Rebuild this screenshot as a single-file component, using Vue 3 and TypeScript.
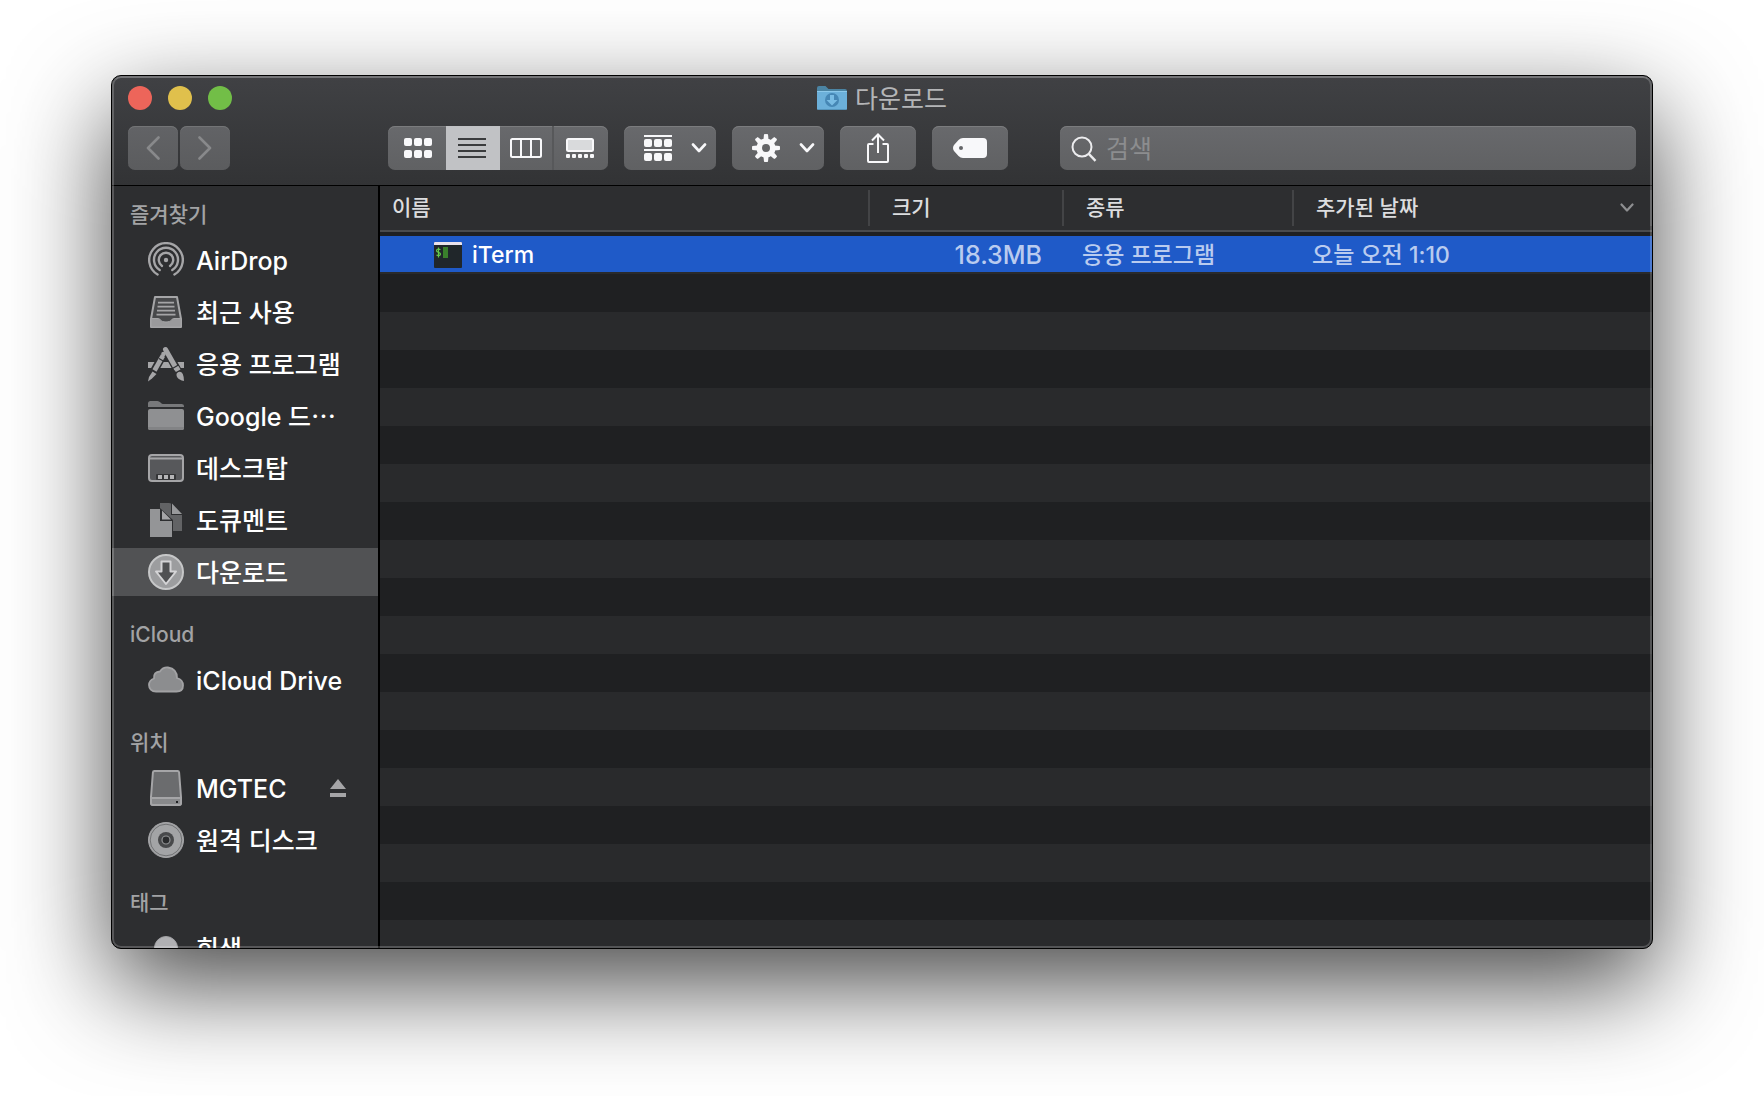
<script setup lang="ts">
import { ref } from 'vue'

interface Place {
  icon: string
  label: string
  ejectable?: boolean
}

interface PlaceGroup {
  title: string
  places: Place[]
}

interface FileEntry {
  name: string
  size: string
  kind: string
  added: string
}

const groups: PlaceGroup[] = [
  {
    title: '즐겨찾기',
    places: [
      { icon: 'airdrop', label: 'AirDrop' },
      { icon: 'recents', label: '최근 사용' },
      { icon: 'apps', label: '응용 프로그램' },
      { icon: 'folder', label: 'Google 드⋯' },
      { icon: 'desktop', label: '데스크탑' },
      { icon: 'documents', label: '도큐멘트' },
      { icon: 'downloads', label: '다운로드' },
    ],
  },
  { title: 'iCloud', places: [{ icon: 'cloud', label: 'iCloud Drive' }] },
  {
    title: '위치',
    places: [
      { icon: 'drive', label: 'MGTEC', ejectable: true },
      { icon: 'disc', label: '원격 디스크' },
    ],
  },
  { title: '태그', places: [{ icon: 'tag', label: '회색' }] },
]

const files: FileEntry[] = [
  { name: 'iTerm', size: '18.3MB', kind: '응용 프로그램', added: '오늘 오전 1:10' },
]

const gearAngles = [0, 45, 90, 135, 180, 225, 270, 315]
const current = ref('다운로드')
const selected = ref('iTerm')
const query = ref('')
</script>

<template>
  <div class="desktop">
    <main class="window">
      <header class="header">
        <div class="titlebar">
          <div class="lights">
            <button class="light close" aria-label="닫기"></button>
            <button class="light minimize" aria-label="최소화"></button>
            <button class="light zoom" aria-label="확대"></button>
          </div>
          <h1 class="title">
            <svg width="30" height="24" viewBox="0 0 30 24" aria-hidden="true">
              <path d="M0 2a2 2 0 0 1 2-2h6.500l3 3H28a2 2 0 0 1 2 2v4H0z" fill="#4b84a3" />
              <rect y="5" width="30" height="19" rx="1.500" fill="#6cb0da" />
              <path d="M0 5.500h30" stroke="#8cc8ea" />
              <path d="M1 23.500h28" stroke="#5594bb" />
              <circle cx="15" cy="14" r="7" fill="#4687b5" />
              <path d="M13 9h4v5h3.500L15 19.500 9.500 14H13z" fill="#79bce4" />
            </svg>
            <span>다운로드</span>
          </h1>
        </div>

        <div class="toolbar">
          <div class="history">
            <button class="control nav" aria-label="뒤로">
              <svg width="14" height="24" viewBox="0 0 14 24"><path d="M12.500 1.500 2 12l10.500 10.500" fill="none" stroke="#88898b" stroke-width="2.600" stroke-linecap="round" stroke-linejoin="round" /></svg>
            </button>
            <button class="control nav" aria-label="앞으로">
              <svg width="14" height="24" viewBox="0 0 14 24"><path d="M1.500 1.500 12 12 1.500 22.500" fill="none" stroke="#88898b" stroke-width="2.600" stroke-linecap="round" stroke-linejoin="round" /></svg>
            </button>
          </div>

          <div class="actions">
            <div class="control views">
              <button class="view first" aria-label="아이콘">
                <svg width="28" height="20" viewBox="0 0 28 20" fill="#f8f8fa">
                  <rect v-for="n in 6" :key="n" :x="((n - 1) % 3) * 10" :y="n > 3 ? 12 : 0" width="8" height="8" rx="2" />
                </svg>
              </button>
              <button class="view active" aria-label="목록" aria-pressed="true">
                <svg width="28" height="20" viewBox="0 0 28 20" fill="#3a3b3d">
                  <rect v-for="n in 4" :key="n" :y="(n - 1) * 6" width="28" height="2" />
                </svg>
              </button>
              <button class="view columns" aria-label="계층">
                <svg width="32" height="20" viewBox="0 0 32 20" fill="none" stroke="#f8f8fa" stroke-width="2">
                  <rect x="1" y="1" width="30" height="18" rx="1.500" />
                  <path d="M11 1v18M21 1v18" />
                </svg>
              </button>
              <button class="view last" aria-label="갤러리">
                <svg width="28" height="20" viewBox="0 0 28 20">
                  <rect x="1" y="1" width="26" height="12" rx="1.500" fill="#d9dadc" stroke="#f8f8fa" stroke-width="2" />
                  <rect v-for="n in 5" :key="n" :x="(n - 1) * 6" y="16" width="4" height="4" rx="1" fill="#f8f8fa" />
                </svg>
              </button>
            </div>

            <button class="control menu" aria-label="정렬">
              <svg width="28" height="26" viewBox="0 0 28 26" fill="#f8f8fa">
                <rect width="28" height="2" />
                <rect v-for="n in 3" :key="n" :x="(n - 1) * 10" y="4" width="8" height="8" rx="2" />
                <rect y="14" width="28" height="2" />
                <rect v-for="n in 3" :key="n + 3" :x="(n - 1) * 10" y="18" width="8" height="8" rx="2" />
              </svg>
              <svg width="16" height="10" viewBox="0 0 16 10"><path d="M2 1.500 8 8l6-6.500" fill="none" stroke="#f8f8fa" stroke-width="2.600" stroke-linecap="round" stroke-linejoin="round" /></svg>
            </button>

            <button class="control menu" aria-label="동작">
              <svg width="28" height="28" viewBox="0 0 28 28">
                <g fill="#f8f8fa">
                  <path v-for="a in gearAngles" :key="a" d="M11.500 5.500 12 .3q2-.6 4 0l.5 5.200z" :transform="`rotate(${a} 14 14)`" />
                </g>
                <circle cx="14" cy="14" r="6.800" fill="none" stroke="#f8f8fa" stroke-width="5.600" />
              </svg>
              <svg width="16" height="10" viewBox="0 0 16 10"><path d="M2 1.500 8 8l6-6.500" fill="none" stroke="#f8f8fa" stroke-width="2.600" stroke-linecap="round" stroke-linejoin="round" /></svg>
            </button>

            <button class="control single" aria-label="공유">
              <svg width="22" height="30" viewBox="0 0 22 30" fill="none" stroke="#f8f8fa" stroke-width="2">
                <path d="M6.500 11H2a1 1 0 0 0-1 1v16a1 1 0 0 0 1 1h18a1 1 0 0 0 1-1V12a1 1 0 0 0-1-1h-4.500M11 20V1.500M5 7.500l6-6 6 6" />
              </svg>
            </button>

            <button class="control single" aria-label="태그 편집">
              <svg width="34" height="20" viewBox="0 0 34 20">
                <path fill-rule="evenodd" fill="#f8f8fa" d="M10 0h20a4 4 0 0 1 4 4v12a4 4 0 0 1-4 4H10Q7.500 20 5.500 18L1 13Q-1 10 1 7L5.500 2Q7.500 0 10 0zM8 8a2 2 0 1 0 0 4 2 2 0 0 0 0-4z" />
              </svg>
            </button>
          </div>

          <label class="control search">
            <svg width="26" height="26" viewBox="0 0 26 26" fill="none" stroke="#ececee" stroke-width="2">
              <circle cx="11" cy="11" r="9.500" />
              <path d="m17.800 17.800 6.700 7" stroke-width="2.400" />
            </svg>
            <input v-model="query" type="search" placeholder="검색" aria-label="검색" />
          </label>
        </div>
      </header>

      <div class="body">
        <nav class="sidebar">
          <section v-for="group in groups" :key="group.title" class="group">
            <h2>{{ group.title }}</h2>
            <ul>
              <li v-for="place in group.places" :key="place.label">
                <a href="#" class="place" :class="{ current: current === place.label }" @click.prevent="current = place.label">
                  <svg class="place-icon" width="36" height="36" viewBox="0 0 36 36" aria-hidden="true">
                    <g v-if="place.icon === 'airdrop'" fill="none" stroke="#a5a5a7" stroke-width="2.400" stroke-linecap="round">
                      <path d="M9.600 32.500a16.800 16.800 0 1 1 16.800 0" />
                      <path d="M11.700 28a12 12 0 1 1 12.600 0" />
                      <path d="M14 23.900a7.200 7.200 0 1 1 8 0" />
                      <circle cx="18" cy="18" r="2.200" fill="#a5a5a7" stroke="none" />
                    </g>
                    <g v-else-if="place.icon === 'recents'">
                      <path d="M7 3h22l4 22v8H3v-8z" fill="#48494b" stroke="#a5a5a7" stroke-width="2" stroke-linejoin="round" />
                      <path d="M10 8.700h16M9.500 12.700h17M9 16.700h18M8.500 20.700h19" stroke="#a5a5a7" stroke-width="1.800" />
                      <path d="M3 24.500h7.500c2 0 1.500 3.500 7.500 3.500s5.500-3.500 7.500-3.500H33V33H3z" fill="#9a9a9c" stroke="#a5a5a7" />
                    </g>
                    <g v-else-if="place.icon === 'apps'" fill="#a5a5a7">
                      <path d="M0 16h36v6H0z" />
                      <path d="M15.500 8 5 27M17 2l14 25" stroke="#2d2e30" stroke-width="8" />
                      <path d="M15 9.500 6.500 24.500" stroke="#a5a5a7" stroke-width="4.600" />
                      <path d="M4.500 25.500 8.500 28 4 32.500 0 35.500 1 31z" />
                      <circle cx="15.500" cy="8" r="2.300" />
                      <path d="M17.500 3.500 28 22" stroke="#a5a5a7" stroke-width="5" stroke-linecap="round" />
                      <path d="m25.500 22.500 5-2.500 2 3.500-4.600 2.500z" />
                      <path d="M28.800 27.200q3.700-3.200 6 .8 1.200 3 1.200 7-5-1-7-4-1-2-.2-3.800z" />
                      <path d="m24 22.700 6-3.500M11 12.500l5 3" stroke="#2d2e30" stroke-width="1.200" />
                    </g>
                    <g v-else-if="place.icon === 'folder'">
                      <path d="M0 9V5.500Q0 3 2.500 3h7q1.500 0 3 1.500T15 6h18.500Q36 6 36 8v1z" fill="#78797b" />
                      <rect y="11" width="36" height="21" rx="2" fill="#8f9092" />
                      <path d="M0 29h36v1q0 2-2 2H2q-2 0-2-2z" fill="#828385" />
                    </g>
                    <g v-else-if="place.icon === 'desktop'">
                      <rect x="1" y="5" width="34" height="26" rx="3" fill="#57585b" stroke="#a5a5a7" stroke-width="2" />
                      <path d="M1 8.500h34" stroke="#a5a5a7" stroke-width="2" />
                      <rect x="8" y="24" width="20" height="6" rx="1" fill="#343537" />
                      <path d="M10 27h4m2 0h4m2 0h4" stroke="#b5b5b7" stroke-width="4" />
                    </g>
                    <g v-else-if="place.icon === 'documents'">
                      <path d="M12 1h9l2 .5V13h11v16h-9L12 18z" fill="#626365" />
                      <path d="M24 1.500 34 12H24z" fill="#98999b" />
                      <path d="M1 6h11l13 12v18H1z" fill="#2d2e30" />
                      <path d="M2 7h10v12h12v16H2z" fill="#949597" />
                      <path d="M14 8.500 23 17.500H14z" fill="#a5a5a7" />
                    </g>
                    <g v-else-if="place.icon === 'downloads'">
                      <circle cx="18" cy="18" r="17" fill="#9c9d9f" stroke="#c6c7c8" stroke-width="2" />
                      <path d="M13.500 7.500h9v10H28L18 30 8 17.500h5.500z" fill="#505153" stroke="#d4d4d6" stroke-width="2" stroke-linejoin="round" />
                    </g>
                    <path v-else-if="place.icon === 'cloud'" d="M8 29.500C3.500 29.500 1 26.500 1 23q0-4.500 5-6.500-.5-6.500 6-7Q15 5 20 5.500q9 1.500 9 10.500 6 1.500 6 7.500 0 6-6.500 6z" fill="#8c8d8f" stroke="#a2a2a4" stroke-width="1.800" />
                    <g v-else-if="place.icon === 'drive'">
                      <path d="M6.500 1h23q1.500 0 1.600 1.500L33 27v5.500q0 2.500-2.500 2.500h-25Q3 35 3 32.500V27L4.900 2.500Q5 1 6.500 1z" fill="#6b6c6e" stroke="#a5a5a7" stroke-width="2" />
                      <path d="M3 28h30v5q0 2-2 2H5q-2 0-2-2z" fill="#88898b" stroke="#a5a5a7" stroke-width="2" />
                      <rect x="28" y="31" width="2" height="2" fill="#1f2022" />
                    </g>
                    <g v-else-if="place.icon === 'disc'" fill="none">
                      <circle cx="18" cy="18" r="17.500" fill="#a3a4a6" stroke="#a5a5a7" />
                      <circle cx="18" cy="18" r="15.800" stroke="#707173" />
                      <circle cx="18" cy="18" r="8" fill="#48494b" />
                      <circle cx="18" cy="18" r="4" fill="#2a2b2d" stroke="#929395" stroke-width="1.200" />
                    </g>
                    <circle v-else cx="18" cy="18" r="11.500" fill="#b0b0b3" stroke="#a0a0a3" />
                  </svg>
                  <span class="place-label">{{ place.label }}</span>
                  <svg v-if="place.ejectable" class="eject" width="16" height="18" viewBox="0 0 16 18" fill="#a5a5a7" aria-hidden="true">
                    <path d="m8 0 8 10H0zM0 14h16v4H0z" />
                  </svg>
                </a>
              </li>
            </ul>
          </section>
        </nav>

        <section class="listing">
          <table>
            <colgroup>
              <col />
              <col class="col-size" />
              <col class="col-kind" />
              <col class="col-added" />
            </colgroup>
            <thead>
              <tr>
                <th scope="col"><span class="heading lead">이름</span></th>
                <th scope="col"><span class="heading">크기</span></th>
                <th scope="col"><span class="heading">종류</span></th>
                <th scope="col" aria-sort="descending">
                  <span class="heading">
                    추가된 날짜
                    <svg width="14" height="10" viewBox="0 0 14 10" aria-hidden="true"><path d="m1.500 1.500 5.500 6 5.500-6" fill="none" stroke="#8e8f91" stroke-width="2.200" stroke-linecap="round" stroke-linejoin="round" /></svg>
                  </span>
                </th>
              </tr>
            </thead>
            <tbody>
              <tr v-for="file in files" :key="file.name" :class="{ selected: selected === file.name }" @click="selected = file.name">
                <td>
                  <span class="file">
                    <svg width="28" height="26" viewBox="0 0 28 26" aria-hidden="true">
                      <rect width="28" height="26" rx="1" fill="#20262a" />
                      <path d="M0 1q0-1 1-1h26q1 0 1 1v2H0z" fill="#e9e2ec" />
                      <path d="M6.500 7.500q-4-1-4 1.200c0 2.200 4 1.200 4 3.400q0 2-4 1M4.500 5.500v10" fill="none" stroke="#62c84a" stroke-width="1.200" />
                      <rect x="9" y="5" width="5" height="11" fill="#3a7f2c" />
                    </svg>
                    {{ file.name }}
                  </span>
                </td>
                <td class="size">{{ file.size }}</td>
                <td>{{ file.kind }}</td>
                <td>{{ file.added }}</td>
              </tr>
            </tbody>
          </table>
        </section>
      </div>
    </main>
  </div>
</template>

<style>
html,
body {
  background: #fff;
}
</style>

<style scoped>
* {
  box-sizing: border-box;
}

.desktop {
  display: flex;
  height: 100vh;
  padding: 75px 111px 147px;
  overflow: hidden;
  font-family: Inter, "Noto Sans CJK KR", sans-serif;
  font-size: 25px;
}

.window {
  position: relative;
  display: flex;
  flex: 1;
  flex-direction: column;
  min-width: 0;
  overflow: hidden;
  border: 1px solid #000;
  border-radius: 10px;
  background: #2d2e30;
  box-shadow: 0 36px 100px rgba(0, 0, 0, 0.72);
}

/* Light rim drawn over the content, just inside the black frame */
.window::after {
  position: absolute;
  inset: 0;
  border: 2px solid rgba(255, 255, 255, 0.2);
  border-top-color: rgba(255, 255, 255, 0.28);
  border-radius: 9px;
  content: "";
  pointer-events: none;
}

svg {
  display: block;
  flex: none;
}

button {
  margin: 0;
  padding: 0;
  border: 0;
  background: none;
  font: inherit;
}

.header {
  flex: none;
  padding: 0 16px 15px;
  border-bottom: 1px solid #000;
  background: linear-gradient(#404144, #323335);
}

.titlebar {
  display: grid;
  grid-template-columns: 1fr auto 1fr;
  align-items: center;
  height: 44px;
}

.lights {
  display: flex;
  gap: 16px;
}

.light {
  width: 24px;
  height: 24px;
  border-radius: 50%;
}

.close {
  background: #ed655a;
}

.minimize {
  background: #e0c04c;
}

.zoom {
  background: #72be47;
}

.title {
  display: flex;
  align-items: center;
  gap: 8px;
  margin: 0;
  color: #b4b5b7;
  font-size: 25px;
  font-weight: 400;
  line-height: 32px;
}

.title span,
.place-label {
  padding-top: 2px;
}

.toolbar {
  display: flex;
  align-items: center;
  padding-top: 6px;
}

.history {
  display: flex;
  gap: 2px;
  margin-right: 158px;
}

.control {
  display: flex;
  align-items: center;
  height: 44px;
  border-radius: 7px;
  background: linear-gradient(#68696c, #606163);
  box-shadow: inset 0 1px #7b7c7e;
}

.nav {
  justify-content: center;
  width: 50px;
  background: linear-gradient(#626366, #5b5c5e);
  box-shadow: inset 0 1px #737476;
}

.actions {
  display: flex;
  gap: 16px;
  margin-right: 52px;
}

.views {
  overflow: hidden;
}

.view {
  display: flex;
  align-items: center;
  justify-content: center;
  width: 54px;
  height: 44px;
}

.view.first {
  width: 58px;
  padding-left: 2px;
}

.view.active {
  padding-right: 2px;
  background: #c1c2c5;
}

.view.columns {
  width: 52px;
}

.view.last {
  width: 56px;
  padding-right: 2px;
  border-left: 2px solid #57585a;
}

.menu {
  justify-content: space-between;
  width: 92px;
  padding: 0 9px 0 20px;
}

.single {
  justify-content: center;
  width: 76px;
}

.search {
  flex: 1;
  gap: 9px;
  min-width: 0;
  padding: 0 11px;
}

.search svg {
  margin-top: 2px;
}

.search input {
  flex: 1;
  min-width: 0;
  padding: 2px 0 0;
  border: 0;
  outline: 0;
  background: none;
  color: #fff;
  font: inherit;
  line-height: 32px;
  appearance: none;
}

.search input::placeholder {
  color: #8c8d8f;
  opacity: 1;
}

.body {
  display: flex;
  flex: 1;
  min-height: 0;
}

.sidebar {
  flex: none;
  width: 268px;
  overflow: hidden;
  border-right: 2px solid #000;
}

.group h2 {
  margin: 0;
  padding: 25px 18px 7px;
  color: #a2a3a5;
  font-size: 21px;
  font-weight: 500;
  line-height: 28px;
}

.group:first-child h2 {
  padding-top: 15px;
}

.group ul {
  display: flex;
  flex-direction: column;
  gap: 4px;
  margin: 0;
  padding: 0;
  list-style: none;
}

.place {
  display: flex;
  align-items: center;
  gap: 12px;
  height: 48px;
  padding: 0 32px 0 36px;
  color: #fff;
  font-weight: 500;
  line-height: 32px;
  text-decoration: none;
  white-space: nowrap;
}

.place.current {
  background: #515254;
}

.place-label {
  flex: 1;
}

.listing {
  flex: 1;
  min-width: 0;
  overflow: hidden;
  background: linear-gradient(#1f2022 50%, #292a2c 50%) 0 12px / 100% 76px;
}

table {
  width: 100%;
  border-spacing: 0;
  table-layout: fixed;
}

.col-size {
  width: 194px;
}

.col-kind {
  width: 230px;
}

.col-added {
  width: 358px;
}

th {
  padding: 4px 0;
  border-bottom: 2px solid #4a4b4d;
  background: #2d2e30;
  color: #dcdddf;
  font-size: 21px;
  font-weight: 500;
  text-align: left;
}

.heading {
  display: flex;
  align-items: center;
  justify-content: space-between;
  height: 36px;
  padding: 0 16px 0 22px;
  border-right: 2px solid #434446;
  line-height: 28px;
}

.heading.lead {
  padding-left: 12px;
}

td {
  height: 42px;
  padding: 2px 22px 0 18px;
  border-top: 4px solid #1f2022;
  border-bottom: 2px solid #292a2c;
  color: #b9cbef;
  font-size: 23px;
  font-weight: 500;
  line-height: 32px;
  white-space: nowrap;
}

.selected td {
  background: #1f5ac8;
}

.file {
  display: flex;
  align-items: center;
  gap: 10px;
  padding-left: 36px;
  color: #fff;
}

.size {
  font-size: 25px;
  text-align: right;
}
</style>
